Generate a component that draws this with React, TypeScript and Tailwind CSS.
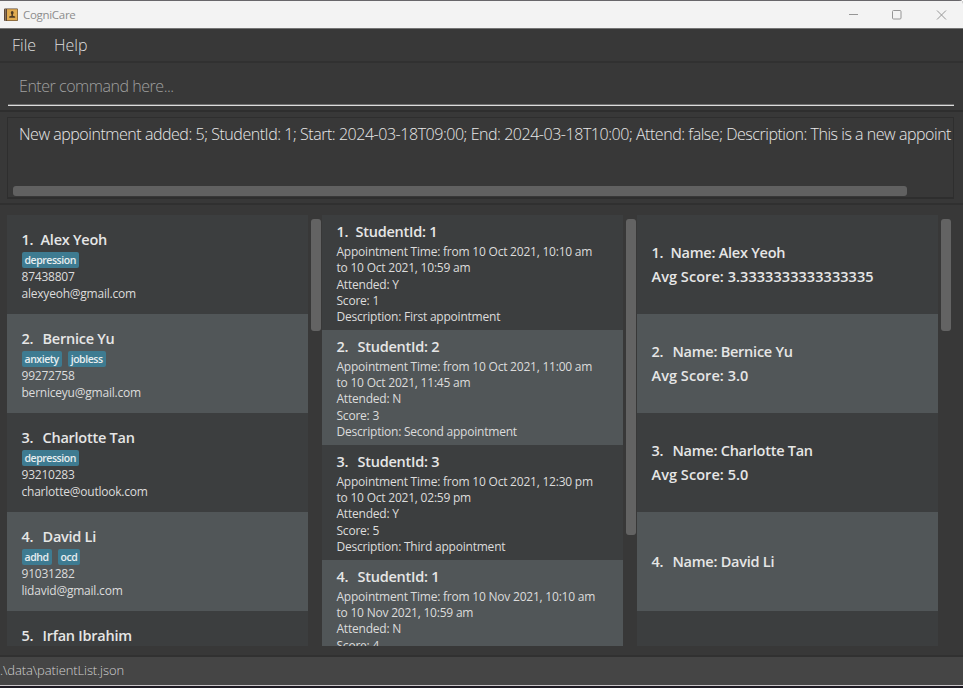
import type { ReactNode } from "react";

const patients = [
  { name: "Alex Yeoh", tags: ["depression"], phone: "87438807", email: "alexyeoh@gmail.com" },
  { name: "Bernice Yu", tags: ["anxiety", "jobless"], phone: "99272758", email: "berniceyu@gmail.com" },
  { name: "Charlotte Tan", tags: ["depression"], phone: "93210283", email: "charlotte@outlook.com" },
  { name: "David Li", tags: ["adhd", "ocd"], phone: "91031282", email: "lidavid@gmail.com" },
  { name: "Irfan Ibrahim", tags: [], phone: "", email: "" },
];

const appointments = [
  { student: 1, from: "10 Oct 2021, 10:10 am", to: "10 Oct 2021, 10:59 am", attended: "Y", score: 1, text: "First appointment" },
  { student: 2, from: "10 Oct 2021, 11:00 am", to: "10 Oct 2021, 11:45 am", attended: "N", score: 3, text: "Second appointment" },
  { student: 3, from: "10 Oct 2021, 12:30 pm", to: "10 Oct 2021, 02:59 pm", attended: "Y", score: 5, text: "Third appointment" },
  { student: 1, from: "10 Nov 2021, 10:10 am", to: "10 Nov 2021, 10:59 am", attended: "N", score: 4, text: "" },
];

const scores = [
  { name: "Alex Yeoh", avg: "3.3333333333333335" },
  { name: "Bernice Yu", avg: "3.0" },
  { name: "Charlotte Tan", avg: "5.0" },
  { name: "David Li", avg: "" },
];

const rowColor = (i: number) => (i % 2 ? "bg-[#515658]" : "bg-[#3c3e3f]");

function Heading({ index, children }: { index: number; children: ReactNode }) {
  return (
    <div className="flex h-6 items-center text-[14.5px] font-semibold leading-6 tracking-[-0.25px] text-[#e6e6e6]">
      <span className={index === 1 ? "w-[19px]" : "w-[21px]"}>{index}.</span>
      <span>{children}</span>
    </div>
  );
}

function Column({ thumb, children }: { thumb: "short" | "long"; children: ReactNode }) {
  return (
    <section className="flex h-[431px] w-[315px] shrink-0">
      <div className="w-[301px] overflow-hidden bg-[#3c3e3f]">{children}</div>
      <div className="w-[14px] pl-[3px] pt-[4px]">
        <div className={thumb === "short" ? "h-[112px] w-[10px] rounded-[3px] bg-[#636363]" : "h-[316px] w-[10px] rounded-[3px] bg-[#636363]"} />
      </div>
    </section>
  );
}

function TitleBar() {
  return (
    <header className="flex h-[29px] items-center border-b border-t border-b-[#747474] border-t-[#68666a] bg-[#f3f3f3] pl-1">
      <svg width="15" height="14" viewBox="0 0 15 14">
        <rect width="14" height="12.5" y="0.5" rx="1" fill="#5b4635" />
        <rect x="3" y="1.2" width="10.4" height="11.2" fill="#e0ab50" />
        <rect x="1" y="1" width="1" height="12" fill="#8b745c" />
        <ellipse cx="8.2" cy="4.8" rx="1.4" ry="1.8" fill="#4c3a24" />
        <path d="M7.5 6h1.4v1.8l2.3.7v1.2h-6V8.5l2.3-.7z" fill="#4c3a24" />
      </svg>
      <span className="ml-1 text-[11.5px] tracking-[-0.3px] text-[#8d8d8d]">CogniCare</span>
      <div className="ml-auto flex items-center pr-[16px]">
        <svg width="98" height="12" viewBox="0 0 98 12" fill="none" stroke="#969696">
          <path d="M0 5.5h9" />
          <rect x="43.5" y="1.5" width="8.5" height="8.5" rx="1" />
          <path d="M88 1.5l9 9M97 1.5l-9 9" />
        </svg>
      </div>
    </header>
  );
}

export default function App() {
  return (
    <div className="flex h-[688px] w-[963px] flex-col overflow-hidden rounded-tr-[4px] bg-[#383838] font-['Open_Sans','Noto_Sans',sans-serif]">
      <TitleBar />
      <nav className="flex h-[34px] items-center gap-[18px] border-b-2 border-[#313131] pl-[12px] text-[16px] font-light text-[#dedede]">
        <span>File</span>
        <span>Help</span>
      </nav>
      <div className="h-[49px] border-b-2 border-[#2e2e2e] px-[8px] pt-[6px]">
        <div className="h-[36px] w-[946px] border-b border-[#6f6f6f] pl-[11px] pt-[5px] text-[16px] font-light leading-6 tracking-[-0.46px] text-[#a0a0a0]">
          Enter command here...
        </div>
        <div className="h-px w-[946px] bg-[#dcdcdc]" />
      </div>
      <div className="h-[93px] border-b-2 border-[#303030] pl-[7px] pt-[5px]">
        <div className="flex h-[82px] w-[947px] flex-col justify-between overflow-hidden border border-b-2 border-[#2e2e2e] pb-px pl-[5px]">
          <p className="whitespace-nowrap pl-[6px] pt-[4px] text-[16px] font-light leading-6 tracking-[-0.46px] text-[#e8e8e8]">
            New appointment added: 5; StudentId: 1; Start: 2024-03-18T09:00; End: 2024-03-18T10:00; Attend: false; Description: This is a new appoint
          </p>
          <div className="h-[10px] w-[894px] shrink-0 rounded-[3px] bg-[#616161]" />
        </div>
      </div>
      <main className="flex h-[450px] pl-[7px] pt-[10px]">
        <Column thumb="short">
          {patients.map((p, i) => (
            <article key={p.name} className={`h-[99px] px-[14.5px] pt-[13px] ${rowColor(i)}`}>
              <Heading index={i + 1}>{p.name}</Heading>
              <div className="mb-px flex h-4 gap-[6px]">
                {p.tags.map((t) => (
                  <span key={t} className="h-4 rounded-[2px] bg-[#3e7b91] px-[3px] text-[10.5px] font-semibold leading-4 tracking-[-0.45px] text-[#e8eef0]">{t}</span>
                ))}
              </div>
              <p className="text-[12px] leading-[16.5px] tracking-[-0.22px] text-[#dcdcdc]">{p.phone}</p>
              <p className="text-[12px] leading-[16.5px] tracking-[-0.22px] text-[#dcdcdc]">{p.email}</p>
            </article>
          ))}
        </Column>
        <Column thumb="long">
          {appointments.map((a, i) => (
            <article key={i} className={`h-[114.9px] px-[14.5px] pt-[5px] ${rowColor(i)}`}>
              <Heading index={i + 1}>StudentId: {a.student}</Heading>
              <div className="text-[12px] leading-[16.3px] tracking-[-0.22px] text-[#dcdcdc]">
                <p>Appointment Time: from {a.from}</p>
                <p>to {a.to}</p>
                <p>Attended: {a.attended}</p>
                <p>Score: {a.score}</p>
                <p>Description: {a.text}</p>
              </div>
            </article>
          ))}
        </Column>
        <Column thumb="short">
          {scores.map((s, i) => (
            <article key={s.name} className={`flex h-[99px] flex-col justify-center px-[14.5px] ${rowColor(i)}`}>
              <Heading index={i + 1}>Name: {s.name}</Heading>
              {s.avg && <p className="text-[14.5px] font-semibold leading-6 tracking-[0.06px] text-[#e6e6e6]">Avg Score: {s.avg}</p>}
            </article>
          ))}
        </Column>
      </main>
      <footer className="flex h-[31px] items-center border-b border-t-2 border-b-[#c9c5c8] border-t-[#313131] bg-[#454545] text-[13px] font-light tracking-[-0.1px] text-[#d0d0d0]">
        .\data\patientList.json
      </footer>
      <div className="h-[2px] bg-[#1d1a22]" />
    </div>
  );
}
